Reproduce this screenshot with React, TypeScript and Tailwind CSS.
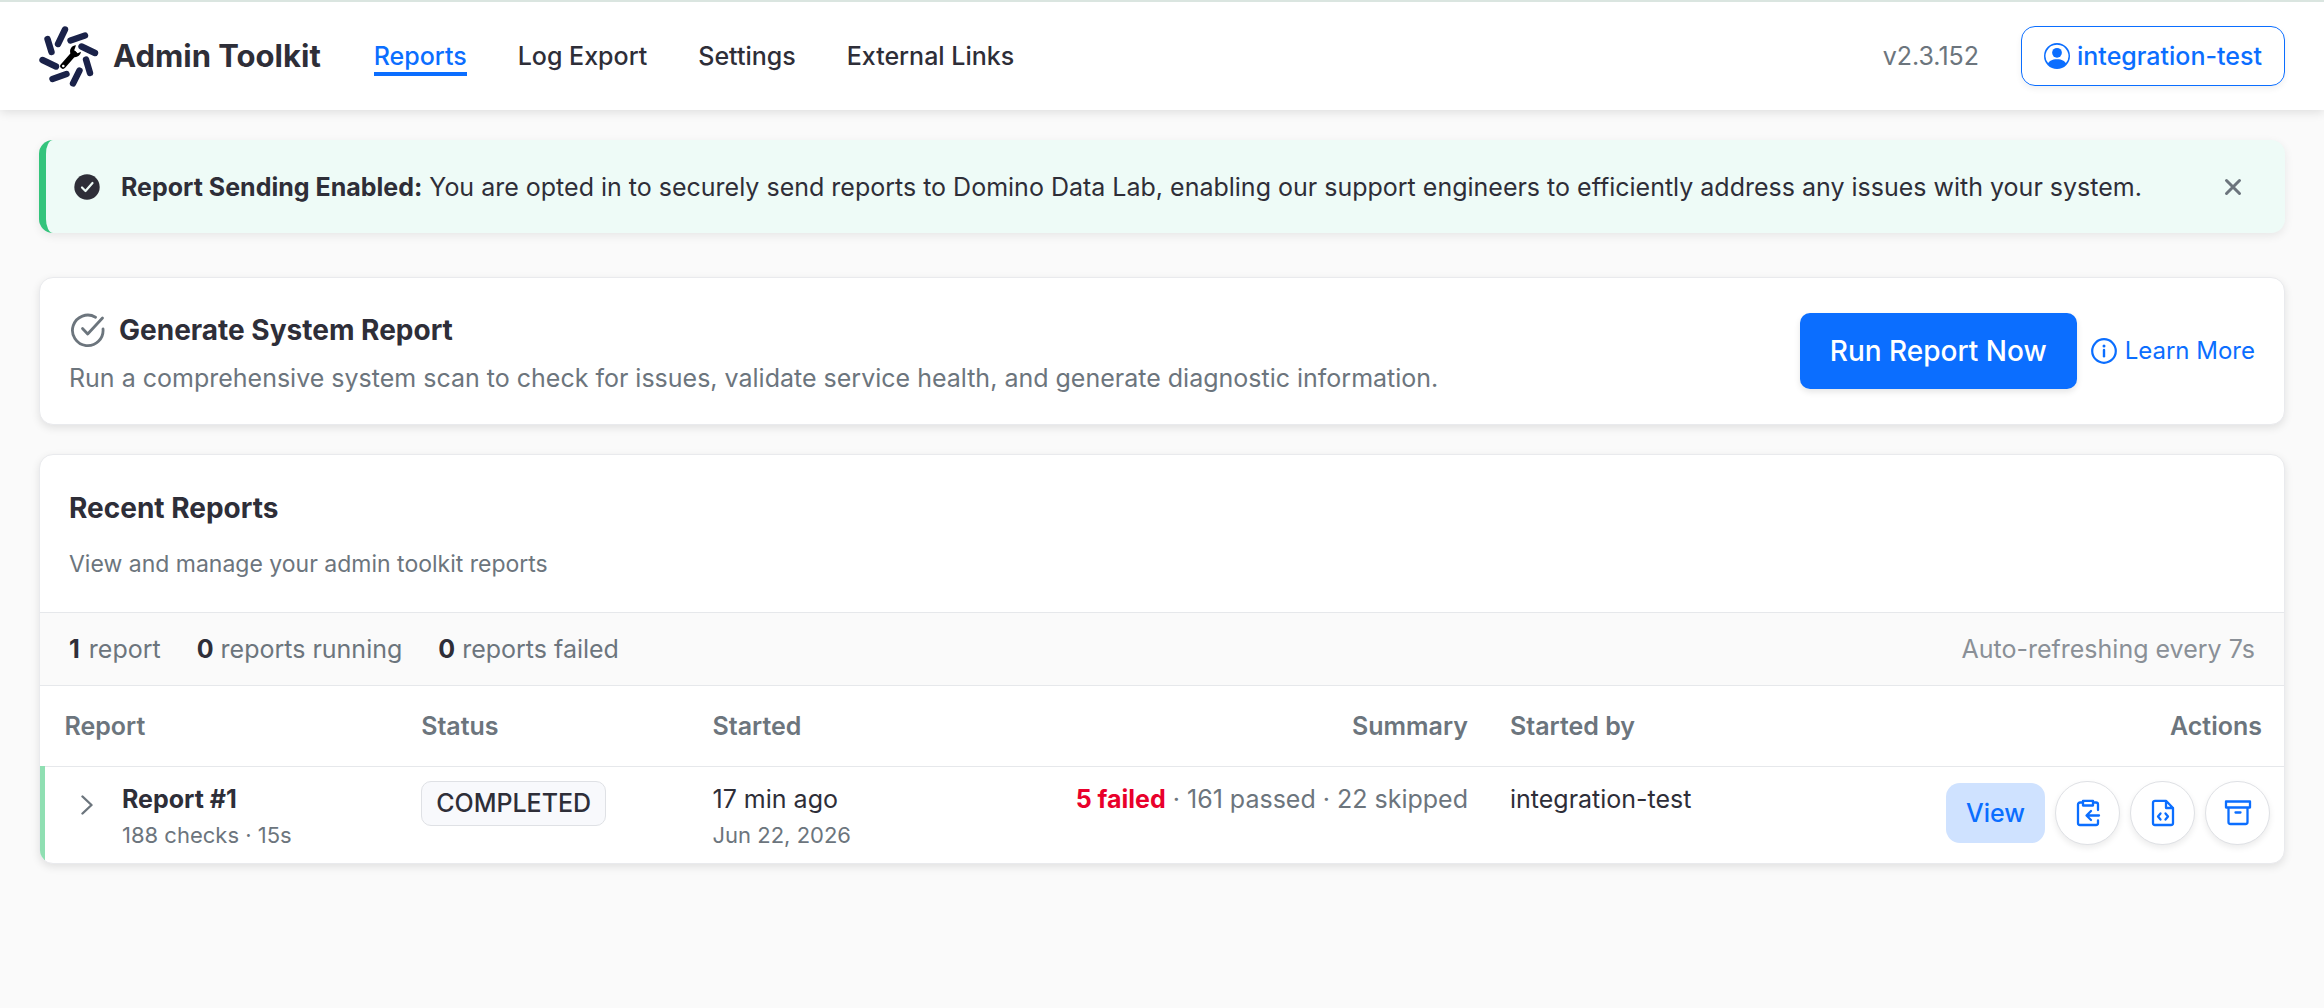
import type { ReactNode } from 'react';

const NAV = ['Reports', 'Log Export', 'Settings', 'External Links'];

const Logo = () => (
  <svg viewBox="0 0 60 62" className="h-[62px] w-[60px] shrink-0" aria-hidden="true">
    <g stroke="#1a2249" strokeWidth="6.4" strokeLinecap="round">
      <path d="M26 4.5 19 19M31.500 15.500 46 10.500M42.500 21.500 56 28M47 34.500 51 48M40.500 45.500 34 58.500M27.500 49 13.500 54M17 41.500 3.500 35M12.500 27 8.500 14" />
    </g>
    <path d="M24 41 35 28.500" stroke="#000" strokeWidth="5.600" strokeLinecap="round" />
    <path
      d="M37 20.200a6 6 0 0 0-5.500 8.300l3.800 3.700a6.200 6.200 0 0 0 6.700-5.500l-3.400 1.600-3.500-2.700z"
      fill="#000"
    />
    <circle cx="24.300" cy="41" r="1.300" fill="#fff" />
  </svg>
);

const UserIcon = () => (
  <svg viewBox="0 0 16 16" fill="currentColor" className="size-[26px]" aria-hidden="true">
    <path d="M11 6a3 3 0 1 1-6 0 3 3 0 0 1 6 0" />
    <path
      fillRule="evenodd"
      d="M0 8a8 8 0 1 1 16 0A8 8 0 0 1 0 8m8-7a7 7 0 0 0-5.468 11.370C3.242 11.226 4.805 10 8 10s4.757 1.225 5.468 2.370A7 7 0 0 0 8 1"
    />
  </svg>
);

const InfoIcon = () => (
  <svg viewBox="0 0 26 26" fill="none" stroke="currentColor" className="size-[26px]" aria-hidden="true">
    <circle cx="13" cy="13" r="11.800" strokeWidth="2.200" />
    <path d="M13 12v6.200" strokeWidth="2.400" strokeLinecap="round" />
    <circle cx="13" cy="8" r="1.500" fill="currentColor" stroke="none" />
  </svg>
);

interface IconButtonProps {
  label: string;
  children: ReactNode;
}

const IconButton = ({ label, children }: IconButtonProps) => (
  <button
    type="button"
    aria-label={label}
    className="flex h-16 w-[65px] items-center justify-center rounded-full border border-[#dfe1e5] bg-white text-[#0b6eff] shadow-[0_3px_6px_rgba(0,0,0,0.08)]"
  >
    <svg
      viewBox="0 0 28 28"
      fill="none"
      stroke="currentColor"
      strokeWidth="2.300"
      strokeLinecap="round"
      strokeLinejoin="round"
      className="size-7"
      aria-hidden="true"
    >
      {children}
    </svg>
  </button>
);

const Header = () => (
  <header className="flex h-[110px] items-center border-t-2 border-[#dae5e0] bg-white px-[39px] shadow-[0_2px_10px_rgba(0,0,0,0.12)]">
    <Logo />
    <span className="ml-[14px] text-[31px] font-bold">Admin Toolkit</span>
    <nav className="ml-[53px] flex gap-[51px] leading-8 font-medium">
      {NAV.map((item, i) => (
        <a
          key={item}
          href="#"
          className={
            i === 0
              ? 'border-y-4 border-t-transparent border-b-[#0b6eff] text-[#0b6eff]'
              : 'border-y-4 border-transparent'
          }
        >
          {item}
        </a>
      ))}
    </nav>
    <span className="ml-auto text-[#6c757d]">v2.3.152</span>
    <button
      type="button"
      className="ml-[42px] flex h-[60px] items-center gap-[7px] rounded-[14px] border border-[#0b6eff] px-[22px] font-medium text-[#0b6eff] shadow-[0_3px_6px_rgba(0,0,0,0.06)]"
    >
      <UserIcon />
      integration-test
    </button>
  </header>
);

const Banner = () => (
  <div
    role="status"
    className="flex h-[93px] items-center rounded-[14px] border-l-[7px] border-[#34c47c] bg-[#eefbf7] pr-[43px] pl-7 shadow-[0_3px_10px_rgba(0,0,0,0.08)]"
  >
    <svg viewBox="0 0 26 26" className="size-[26px] shrink-0" aria-hidden="true">
      <circle cx="13" cy="13" r="12.700" fill="#2e2e38" />
      <path
        d="m8 13.500 3.500 3.500 7-8"
        fill="none"
        stroke="#eefbf7"
        strokeWidth="2.200"
        strokeLinecap="round"
        strokeLinejoin="round"
      />
    </svg>
    <p className="ml-[21px]">
      <strong className="font-bold">Report Sending Enabled:</strong> You are opted in to securely
      send reports to Domino Data Lab, enabling our support engineers to efficiently address any
      issues with your system.
    </p>
    <button type="button" aria-label="Dismiss" className="ml-auto text-[#6c757d]">
      <svg viewBox="0 0 18 18" className="size-[18px]" aria-hidden="true">
        <path d="m2.500 2.500 13 13m0-13-13 13" stroke="currentColor" strokeWidth="3" strokeLinecap="round" />
      </svg>
    </button>
  </div>
);

const GenerateCard = () => (
  <section className="mt-11 flex h-[148px] items-center justify-between rounded-[14px] border border-[#e9eaed] bg-white px-[29px] shadow-[0_3px_8px_rgba(0,0,0,0.1)]">
    <div className="pt-1">
      <h2 className="flex items-center gap-[14px] text-[28px] leading-10 font-bold">
        <svg
          viewBox="0 0 36 36"
          fill="none"
          stroke="#6c757d"
          strokeWidth="2.800"
          strokeLinecap="round"
          strokeLinejoin="round"
          className="size-9"
          aria-hidden="true"
        >
          <path d="M26.500 5.200A15.300 15.300 0 1 0 34 17" />
          <path d="m13.500 16.500 5.200 5.500L33.500 6" />
        </svg>
        Generate System Report
      </h2>
      <p className="mt-[10px] text-[#6c757d]">
        Run a comprehensive system scan to check for issues, validate service health, and generate
        diagnostic information.
      </p>
    </div>
    <div className="flex items-center gap-[14px]">
      <button
        type="button"
        className="h-[76px] rounded-[10px] bg-[#0b6eff] px-[30px] text-[28px] font-medium text-white shadow-[0_3px_6px_rgba(0,0,0,0.1)]"
      >
        Run Report Now
      </button>
      <a href="#" className="flex items-center gap-2 text-[24px] text-[#0b6eff]">
        <InfoIcon />
        Learn More
      </a>
    </div>
  </section>
);

const ReportsTable = () => (
  <table className="w-full table-fixed text-left">
    <thead>
      <tr className="h-20 text-[#6c757d]">
        <th className="w-[16%] pl-[22px] font-semibold">Report</th>
        <th className="w-[13%] pl-5 font-semibold">Status</th>
        <th className="w-[13%] pl-5 font-semibold">Started</th>
        <th className="pr-5 text-right font-semibold">Summary</th>
        <th className="w-[360px] pl-[22px] font-semibold">Started by</th>
        <th className="w-[436px] pr-[22px] text-right font-semibold">Actions</th>
      </tr>
    </thead>
    <tbody>
      <tr className="h-[97px] border-t border-[#e6e8eb] align-top">
        <td className="border-l-[5px] border-[#8fdfb2] pt-[14px] pl-9">
          <div className="flex gap-[29px]">
            <button type="button" aria-label="Expand report" className="mt-[14px] self-start text-[#6c757d]">
              <svg viewBox="0 0 12 20" fill="none" className="h-5 w-3" aria-hidden="true">
                <path
                  d="m1.500 1.500 9 8.500-9 8.500"
                  stroke="currentColor"
                  strokeWidth="2.400"
                  strokeLinecap="round"
                  strokeLinejoin="round"
                />
              </svg>
            </button>
            <div>
              <div className="font-bold">Report #1</div>
              <div className="text-[22px] text-[#6c757d]">188 checks · 15s</div>
            </div>
          </div>
        </td>
        <td className="pt-[14px] pl-5">
          <span className="inline-flex h-[45px] items-center rounded-[10px] border border-[#dfe1e5] bg-[#f8f9fc] px-[14px] font-medium">
            COMPLETED
          </span>
        </td>
        <td className="pt-[14px] pl-5">
          <div>17 min ago</div>
          <div className="text-[22px] text-[#6c757d]">Jun 22, 2026</div>
        </td>
        <td className="pt-[14px] pr-5 text-right whitespace-nowrap text-[#6c757d]">
          <span className="font-bold text-[#e9002b]">5 failed</span> · 161 passed · 22 skipped
        </td>
        <td className="pt-[14px] pl-[22px]">integration-test</td>
        <td className="pt-[14px] pr-[14px]">
          <div className="flex items-center justify-end gap-[10px]">
            <button
              type="button"
              className="h-[60px] rounded-[14px] bg-[#cfe2ff] px-5 font-medium text-[#0b6eff]"
            >
              View
            </button>
            <IconButton label="Copy report">
              <path d="M9 3.500H6a2 2 0 0 0-2 2V24a2 2 0 0 0 2 2h16a2 2 0 0 0 2-2v-2.500M19 3.500h3a2 2 0 0 1 2 2V11" />
              <path d="M9 1.800h10v4.700H9zM25 16.500H13M17 12l-4.500 4.500L17 21" />
            </IconButton>
            <IconButton label="Download JSON">
              <path d="M17 1.800H6a2 2 0 0 0-2 2V24a2 2 0 0 0 2 2h16a2 2 0 0 0 2-2V9zM17 1.800V9h7" />
              <path d="m11.500 14.500-2.500 3 2.500 3M16.500 14.500l2.500 3-2.500 3" />
            </IconButton>
            <IconButton label="Archive report">
              <path d="M2 2.500h24v6H2zM4.500 8.500V23a2 2 0 0 0 2 2h15a2 2 0 0 0 2-2V8.500M11.500 13.500h5" />
            </IconButton>
          </div>
        </td>
      </tr>
    </tbody>
  </table>
);

export default function App() {
  return (
    <div className="min-h-screen bg-[#fafafa] font-['Inter','Liberation_Sans',sans-serif] text-[25px] leading-9 text-[#2e2e38]">
      <Header />
      <main className="px-[39px] pt-[30px] pb-10">
        <Banner />
        <GenerateCard />
        <section className="mt-[29px] overflow-hidden rounded-[14px] border border-[#e9eaed] bg-white shadow-[0_3px_8px_rgba(0,0,0,0.1)]">
          <div className="px-[29px] pt-[33px] pb-[30px]">
            <h2 className="text-[28px] leading-10 font-bold">Recent Reports</h2>
            <p className="mt-[18px] text-[23px] leading-9 text-[#6c757d]">
              View and manage your admin toolkit reports
            </p>
          </div>
          <div className="flex h-[74px] items-center gap-9 border-y border-[#e6e8eb] bg-[#fafafa] px-[29px] text-[#6c757d]">
            <span>
              <b className="mr-0.5 font-bold text-[#2e2e38]">1</b> report
            </span>
            <span>
              <b className="font-bold text-[#2e2e38]">0</b> reports running
            </span>
            <span>
              <b className="font-bold text-[#2e2e38]">0</b> reports failed
            </span>
            <span className="ml-auto text-[#8a9097]">Auto-refreshing every 7s</span>
          </div>
          <ReportsTable />
        </section>
      </main>
    </div>
  );
}
